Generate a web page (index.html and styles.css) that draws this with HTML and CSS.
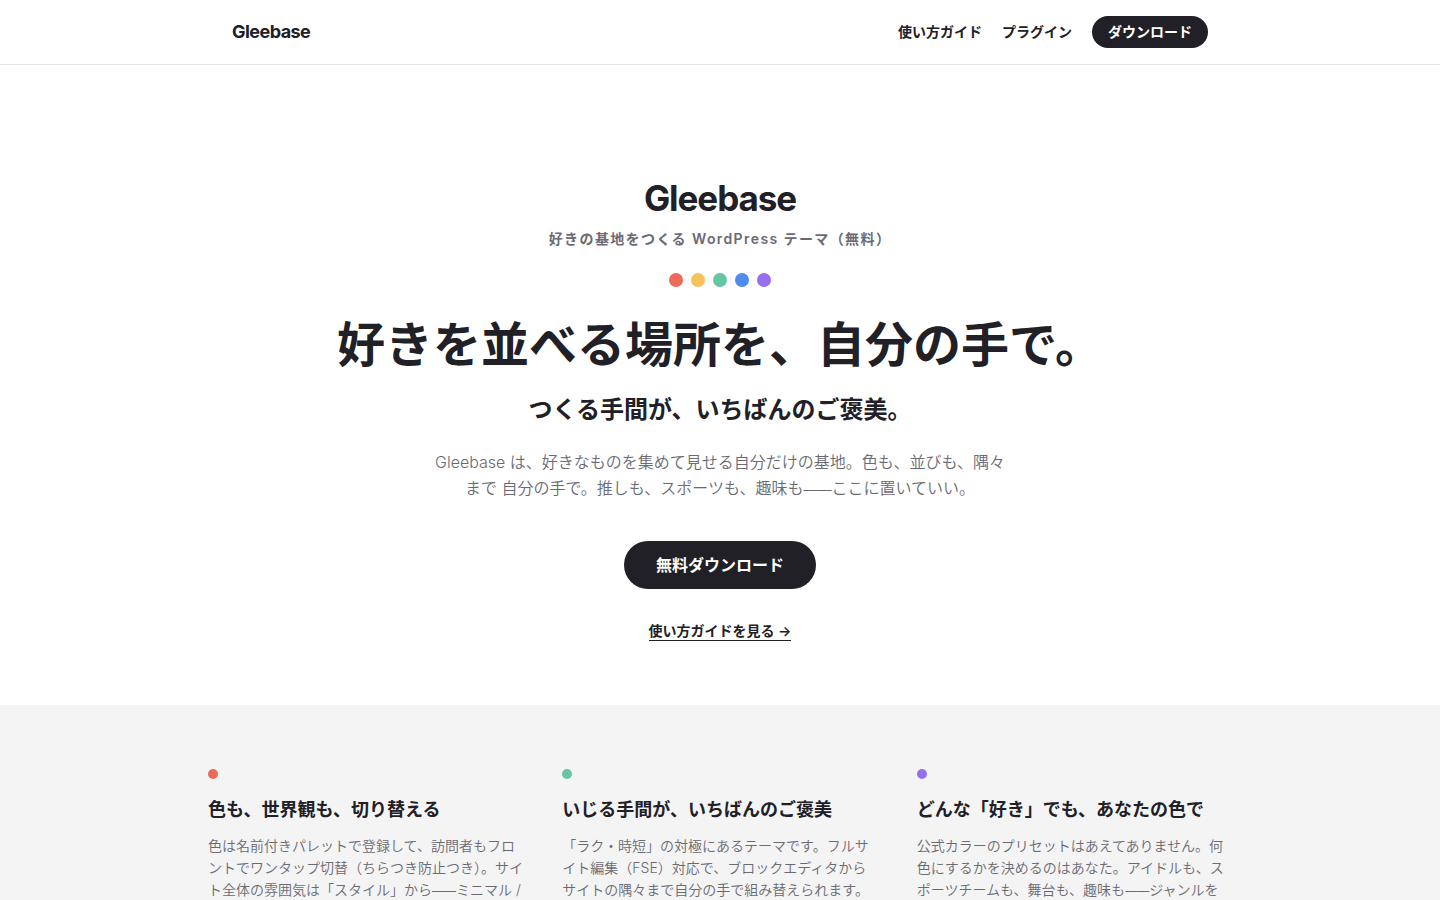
FILE: index.html
```html
<!DOCTYPE html>
<html lang="ja">
<head>
<meta charset="UTF-8">
<meta name="viewport" content="width=device-width, initial-scale=1">
<title>Gleebase</title>
<link rel="stylesheet" href="styles.css">
</head>
<body>

<header class="site-header">
  <div class="header-inner">
    <a class="site-title" href="#">Gleebase</a>
    <nav class="site-nav">
      <a href="#">使い方ガイド</a>
      <a href="#">プラグイン</a>
      <a class="nav-button" href="#">ダウンロード</a>
    </nav>
  </div>
</header>

<main>
  <section class="hero">
    <p class="hero-brand">Gleebase</p>
    <p class="hero-tagline">好きの基地をつくる WordPress テーマ（無料）</p>
    <div class="dots">
      <span class="dot red"></span>
      <span class="dot yellow"></span>
      <span class="dot green"></span>
      <span class="dot blue"></span>
      <span class="dot purple"></span>
    </div>
    <h1>好きを並べる場所を、自分の手で。</h1>
    <p class="hero-sub">つくる手間が、いちばんのご褒美。</p>
    <p class="hero-lead">Gleebase は、好きなものを集めて見せる自分だけの基地。色も、並びも、隅々まで 自分の手で。推しも、スポーツも、趣味も<span class="dash">——</span>ここに置いていい。</p>
    <a class="hero-button" href="#">無料ダウンロード</a>
    <a class="hero-link" href="#">使い方ガイドを見る →</a>
  </section>

  <section class="features">
    <div class="features-inner">
      <div class="feature">
        <span class="dot small red"></span>
        <h2>色も、世界観も、切り替える</h2>
        <p>色は名前付きパレットで登録して、訪問者もフロントでワンタップ切替（ちらつき防止つき）。サイト全体の雰囲気は「スタイル」から<span class="dash">——</span>ミニマル /</p>
      </div>
      <div class="feature">
        <span class="dot small green"></span>
        <h2>いじる手間が、いちばんのご褒美</h2>
        <p>「ラク・時短」の対極にあるテーマです。フルサイト編集（FSE）対応で、ブロックエディタからサイトの隅々まで自分の手で組み替えられます。</p>
      </div>
      <div class="feature">
        <span class="dot small purple"></span>
        <h2>どんな「好き」でも、あなたの色で</h2>
        <p>公式カラーのプリセットはあえてありません。何色にするかを決めるのはあなた。アイドルも、スポーツチームも、舞台も、趣味も<span class="dash">——</span>ジャンルを</p>
      </div>
    </div>
  </section>
</main>

</body>
</html>
```

FILE: styles.css
```css
* {
  box-sizing: border-box;
}

body {
  margin: 0;
  background: #fff;
  color: #212026;
  font-family: Inter, "Noto Sans CJK JP", sans-serif;
  font-size: 16px;
  line-height: 26px;
}

h1, h2, p {
  margin: 0;
}

a {
  color: inherit;
  text-decoration: none;
}

.site-header {
  border-bottom: 1px solid #e6e6e8;
}

.header-inner {
  display: flex;
  align-items: center;
  justify-content: space-between;
  max-width: 1024px;
  margin: 0 auto;
  padding: 16px 24px;
}

.site-title {
  font-size: 18px;
  font-weight: 700;
  letter-spacing: -0.03em;
}

.site-nav {
  display: flex;
  align-items: center;
  gap: 20px;
  font-size: 14px;
  font-weight: 600;
}

.nav-button {
  padding: 0 16px;
  border-radius: 16px;
  background: #212026;
  color: #fff;
  line-height: 32px;
}

.hero {
  display: flex;
  flex-direction: column;
  align-items: center;
  padding: 112px 24px 64px;
  text-align: center;
}

.hero-brand {
  font-size: 35px;
  font-weight: 700;
  line-height: 42px;
  letter-spacing: -0.03em;
}

.hero-tagline {
  margin-top: 6px;
  color: #6b6a73;
  font-size: 14px;
  font-weight: 600;
  line-height: 28px;
  letter-spacing: 0.1em;
}

.dots {
  display: flex;
  gap: 8px;
  margin-top: 20px;
}

.dot {
  width: 14px;
  height: 14px;
  border-radius: 50%;
}

.dot.small {
  display: block;
  width: 10px;
  height: 10px;
}

.red { background: #eb6a5b; }
.yellow { background: #f5c25b; }
.green { background: #66c5a3; }
.blue { background: #4f8bf0; }
.purple { background: #966ff0; }

/* shorter dash between Japanese words */
.dash {
  font-family: "Liberation Sans", sans-serif;
  font-size: 12px;
  line-height: 1;
}

.hero-lead .dash {
  font-size: 14px;
}

h1 {
  margin-top: 24px;
  font-size: 48px;
  font-weight: 600;
  line-height: 68px;
}

.hero-sub {
  margin-top: 12px;
  font-size: 24px;
  font-weight: 600;
  line-height: 38px;
}

.hero-lead {
  max-width: 576px;
  margin-top: 20px;
  color: #6b6a73;
  font-weight: 350;
}

.hero-button {
  margin-top: 40px;
  padding: 0 32px;
  border-radius: 24px;
  background: #212026;
  color: #fff;
  font-weight: 600;
  line-height: 48px;
}

.hero-link {
  margin-top: 32px;
  border-bottom: 1px solid #212026;
  font-size: 14px;
  font-weight: 600;
  line-height: 19px;
}

.features {
  padding: 64px 24px;
  background: #f4f4f4;
}

.features-inner {
  display: grid;
  grid-template-columns: repeat(3, 1fr);
  gap: 39px;
  max-width: 1024px;
  margin: 0 auto;
}

.feature h2 {
  margin-top: 16px;
  font-size: 18px;
  font-weight: 600;
  line-height: 30px;
}

.feature p {
  margin-top: 10px;
  color: #6b6a73;
  font-size: 14px;
  font-weight: 350;
  line-height: 22px;
}
```
